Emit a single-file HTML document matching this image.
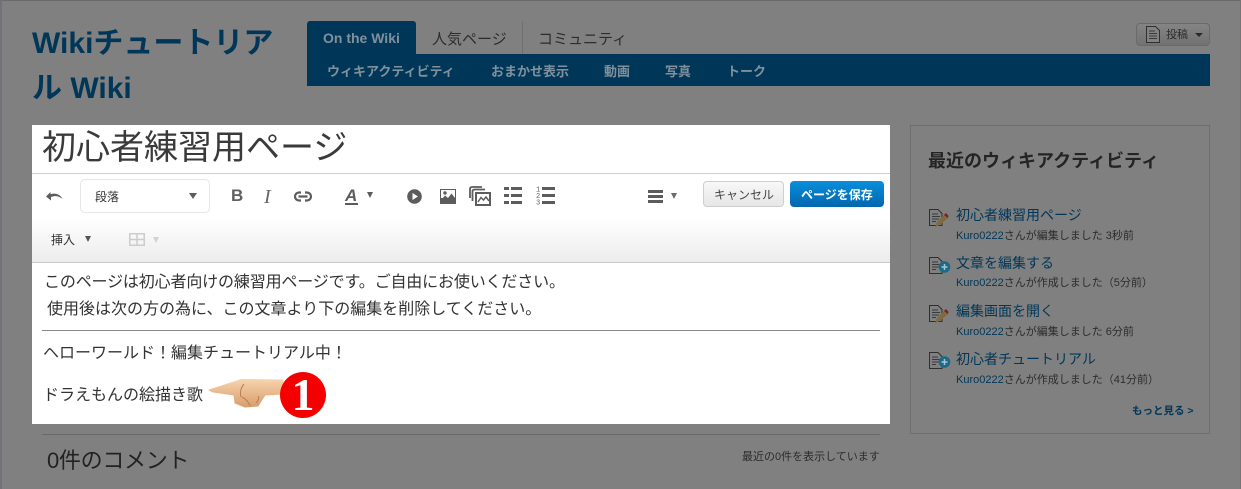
<!DOCTYPE html>
<html lang="ja"><head><meta charset="utf-8"><title>Wiki</title>
<style>
html,body{margin:0;padding:0}
body{width:1241px;height:489px;overflow:hidden;position:relative;background:#808080;font-family:"Liberation Sans","Noto Sans CJK JP",sans-serif;color:#2b2b2b}
.a,.t{position:absolute}
.t{white-space:nowrap;line-height:1.2}
svg{position:absolute;overflow:visible}
</style></head><body>
<div class="a" style="left:0;top:0;width:1241px;height:1px;background:#6a6a6a"></div>
<div class="a" style="left:0;top:0;width:2px;height:489px;background:#707478"></div>
<div class="a" style="right:0;top:0;width:1px;height:489px;background:#757575"></div>

<div class="t" style="left:32px;top:26px;font-size:30px;font-weight:bold;color:#003658;line-height:36px">Wikiチュートリア</div>
<div class="t" style="left:32px;top:71px;font-size:30px;font-weight:bold;color:#003658;line-height:36px">ル Wiki</div>

<div class="a" style="left:307px;top:21px;width:109px;height:40px;background:#003658;border-radius:3px 3px 0 0"></div>
<div class="a" style="left:307px;top:54px;width:903px;height:32px;background:#003658"></div>
<div class="t" style="left:323px;top:30px;font-size:14px;font-weight:bold;color:#80919d">On the Wiki</div>
<div class="t" style="left:432px;top:31px;font-size:15px;color:#2d2d2d">人気ページ</div>
<div class="a" style="left:522px;top:21px;width:1px;height:33px;background:#6f6f6f"></div>
<div class="t" style="left:538px;top:31px;font-size:15px;color:#2d2d2d">コミュニティ</div>
<div class="t" style="left:327px;top:64px;font-size:13px;font-weight:bold;color:#80919d">ウィキアクティビティ</div>
<div class="t" style="left:491px;top:64px;font-size:13px;font-weight:bold;color:#80919d">おまかせ表示</div>
<div class="t" style="left:604px;top:64px;font-size:13px;font-weight:bold;color:#80919d">動画</div>
<div class="t" style="left:665px;top:64px;font-size:13px;font-weight:bold;color:#80919d">写真</div>
<div class="t" style="left:727px;top:64px;font-size:13px;font-weight:bold;color:#80919d">トーク</div>

<div class="a" style="left:1136px;top:23px;width:72px;height:21px;border:1px solid #6a6a6a;border-radius:4px;background:linear-gradient(#848484,#727272)"></div>
<svg style="left:1146px;top:26px" width="14" height="17" viewBox="0 0 14 17"><path d="M.5.5H9.5L13.5 4.500V16.500H.5Z" fill="#828282" stroke="#2f2f2f"/><path d="M3 5H9M3 7.500H11M3 10H11M3 12.500H11" stroke="#3a3a3a"/></svg>
<div class="t" style="left:1166px;top:29px;font-size:11px;color:#2b2b2b">投稿</div>
<div class="a" style="left:1195px;top:33px;border:4px solid transparent;border-top:4px solid #2a2a2a"></div>

<!-- Editor -->
<div class="a" style="left:32px;top:125px;width:858px;height:299px;background:#fff"></div>
<div class="t" style="left:42px;top:126px;font-size:34px;color:#3a3a3a;line-height:44px">初心者練習用ページ</div>
<div class="a" style="left:32px;top:173px;width:858px;height:1px;background:#cfcfcf"></div>
<div class="a" style="left:32px;top:218px;width:858px;height:44px;background:linear-gradient(#fff,#ececec)"></div>
<div class="a" style="left:32px;top:262px;width:858px;height:1px;background:#c9c9c9"></div>

<svg style="left:46px;top:191px" width="17" height="10" viewBox="0 0 17 10"><path d="M0 5.500L4.500 1V3.200C9 1.800 14 3 16.500 8C13 5 9 4.500 5 6V9.500Z" fill="#5c5c5c"/></svg>
<div class="a" style="left:80px;top:179px;width:128px;height:32px;border:1px solid #e6e6e6;border-radius:5px;background:#fff"></div>
<div class="t" style="left:95px;top:190px;font-size:12px;color:#333">段落</div>
<div class="a" style="left:189px;top:193px;border:4px solid transparent;border-top:6px solid #5c5c5c;border-bottom:0"></div>
<div class="t" style="left:231px;top:186px;font-size:17px;font-weight:bold;color:#5f5f5f">B</div>
<div class="t" style="left:264px;top:185px;font-family:'Liberation Serif',serif;font-size:20px;font-style:italic;color:#666">I</div>
<svg style="left:294px;top:191px" width="18" height="11" viewBox="0 0 18 11"><path d="M7 1.500H5a4 4 0 0 0 0 8H7M11 1.500h2a4 4 0 0 1 0 8H11M4.500 5.500H13.500" fill="none" stroke="#5c5c5c" stroke-width="2.200"/></svg>
<div class="t" style="left:345px;top:186px;font-size:17px;font-weight:bold;font-style:italic;color:#5c5c5c">A</div>
<div class="a" style="left:345px;top:203px;width:13px;height:1.500px;background:#5c5c5c"></div>
<div class="a" style="left:367px;top:192px;border:3.500px solid transparent;border-top:6px solid #5c5c5c;border-bottom:0"></div>
<svg style="left:407px;top:189px" width="15" height="15" viewBox="0 0 15 15"><circle cx="7.500" cy="7.500" r="7.300" fill="#5c5c5c"/><path d="M5.500 4L11 7.500L5.500 11Z" fill="#fff"/></svg>
<svg style="left:440px;top:189px" width="16" height="15" viewBox="0 0 16 15"><rect width="16" height="15" fill="#5c5c5c"/><rect x="1" y="1" width="14" height="8" fill="#fff"/><circle cx="5" cy="4" r="1.700" fill="#5c5c5c"/><path d="M1 11L5 6.500L8 9L11.500 4.500L15 9V13H1Z" fill="#5c5c5c"/></svg>
<svg style="left:469px;top:186px" width="22" height="20" viewBox="0 0 22 20"><path d="M1 12V3Q1 1 3 1H13M3.500 15V5.500Q3.500 3.500 5.500 3.500H16" fill="none" stroke="#5c5c5c" stroke-width="1.800"/><rect x="7" y="7" width="14" height="12" fill="#fff" stroke="#5c5c5c" stroke-width="2"/><path d="M9 16L12 11.500L14.500 14L17 11L20 15" fill="none" stroke="#5c5c5c" stroke-width="1.500"/></svg>
<svg style="left:504px;top:186px" width="18" height="18" viewBox="0 0 18 18"><path d="M0 1h5v3H0zM7 1h11v3H7zM0 8h5v3H0zM7 8h11v3H7zM0 15h5v3H0zM7 15h11v3H7z" fill="#5c5c5c"/></svg>
<svg style="left:536px;top:186px" width="19" height="18" viewBox="0 0 19 18"><path d="M6 1h13v3H6zM6 8h13v3H6zM6 15h13v3H6z" fill="#5c5c5c"/><text x="0" y="5.500" font-size="7" fill="#5c5c5c" font-family="Liberation Mono">1</text><text x="0" y="12" font-size="7" fill="#5c5c5c" font-family="Liberation Mono">2</text><text x="0" y="18.500" font-size="7" fill="#5c5c5c" font-family="Liberation Mono">3</text></svg>
<svg style="left:648px;top:190px" width="15" height="13" viewBox="0 0 15 13"><path d="M0 0h15v3H0zM0 5h15v3H0zM0 10h15v3H0z" fill="#5c5c5c"/></svg>
<div class="a" style="left:671px;top:193px;border:3.500px solid transparent;border-top:6px solid #6b6b6b;border-bottom:0"></div>

<div class="a" style="left:703px;top:181px;width:79px;height:24px;border:1px solid #cfcfcf;border-radius:4px;background:linear-gradient(#f8f8f8,#e6e6e6)"></div>
<div class="t" style="left:714px;top:188px;font-size:12px;color:#444">キャンセル</div>
<div class="a" style="left:790px;top:181px;width:94px;height:26px;border-radius:4px;background:linear-gradient(#0a8fdc,#0066ae)"></div>
<div class="t" style="left:801px;top:188px;font-size:12px;font-weight:bold;color:#fff">ページを保存</div>

<div class="t" style="left:51px;top:233px;font-size:12px;color:#333">挿入</div>
<div class="a" style="left:85px;top:236px;border:3.500px solid transparent;border-top:6px solid #555;border-bottom:0"></div>
<svg style="left:129px;top:233px" width="16" height="13" viewBox="0 0 16 13"><rect x=".75" y=".75" width="14.500" height="11.500" fill="none" stroke="#ccc" stroke-width="1.500"/><path d="M8 0V13M0 6.500H16" stroke="#ccc" stroke-width="1.500"/></svg>
<div class="a" style="left:153px;top:237px;border:3.500px solid transparent;border-top:6px solid #d2d2d2;border-bottom:0"></div>

<div class="t" style="left:44px;top:273px;font-size:16px;color:#333;letter-spacing:-.15px">このページは初心者向けの練習用ページです。ご自由にお使いください。</div>
<div class="t" style="left:47px;top:300px;font-size:16px;color:#333">使用後は次の方の為に、この文章より下の編集を削除してください。</div>
<div class="a" style="left:42px;top:330px;width:838px;height:1px;background:#888"></div>
<div class="t" style="left:43px;top:344px;font-size:16px;color:#333">ヘローワールド！編集チュートリアル中！</div>
<div class="t" style="left:43px;top:386px;font-size:16px;color:#333">ドラえもんの絵描き歌</div>

<svg style="left:208px;top:370px" width="122" height="50" viewBox="0 0 122 50">
<defs><linearGradient id="h" x1="0" y1="0" x2="0" y2="1"><stop offset="0" stop-color="#f6d3ac"/><stop offset="1" stop-color="#d99d6c"/></linearGradient></defs>
<path d="M1 20L29 11L33 9.500L75 10L75 24L57 25L50 36L37 37L27 33L26 25L5 22Z" fill="url(#h)" stroke="url(#h)" stroke-linejoin="round"/>
<path d="M36 14Q31 20 33 27M48 33Q52 29 50 26M34 27Q40 30 42 36" fill="none" stroke="#b67f55" stroke-width="1"/>
<circle cx="95" cy="25" r="23" fill="#f40000"/>
<text x="95" y="40" font-family="Liberation Serif" font-size="46" font-weight="bold" fill="#fff" text-anchor="middle">1</text>
</svg>

<!-- Comments -->
<div class="a" style="left:42px;top:434px;width:838px;height:1px;background:#696969"></div>
<div class="t" style="left:47px;top:447px;font-size:22px;color:#222;line-height:28px;letter-spacing:-.3px">0件のコメント</div>
<div class="t" style="left:742px;top:451px;font-size:11px;color:#2b2b2b">最近の0件を表示しています</div>

<!-- Sidebar -->
<div class="a" style="left:910px;top:125px;width:298px;height:307px;border:1px solid #6e6e6e"></div>
<div class="t" style="left:928px;top:151px;font-size:18px;font-weight:bold;color:#242424">最近のウィキアクティビティ</div>

<svg style="left:929px;top:209px" width="20" height="20" viewBox="0 0 20 20"><path d="M.5.500H9L13 4.500V16.500H.5Z" fill="#808080" stroke="#2f2f2f"/><path d="M3 5H9M3 7.500H11M3 10H10M3 12.500H7" stroke="#3a3a3a"/><path d="M6 18L8 13L15 6L19 9L11 16Z" fill="#806a3f"/><path d="M15 6L17 4L19.500 7L19 9Z" fill="#7a1f1f"/></svg>
<div class="t" style="left:956px;top:207px;font-size:14px;color:#003658">初心者練習用ページ</div>
<div class="t" style="left:956px;top:230px;font-size:11px;color:#2c2c2c"><span style="color:#003658">Kuro0222</span>さんが編集しました 3秒前</div>

<svg style="left:929px;top:257px" width="22" height="17" viewBox="0 0 22 17"><path d="M.5.500H9L13 4.500V16.500H.5Z" fill="#808080" stroke="#2f2f2f"/><path d="M3 5H9M3 7.500H11M3 10H10M3 12.500H7" stroke="#3a3a3a"/><circle cx="15.500" cy="10" r="5.800" fill="#1c6a8a"/><path d="M12.500 10h6M15.500 7v6" stroke="#a9c4d0" stroke-width="1.500"/></svg>
<div class="t" style="left:956px;top:255px;font-size:14px;color:#003658">文章を編集する</div>
<div class="t" style="left:956px;top:277px;font-size:11px;color:#2c2c2c"><span style="color:#003658">Kuro0222</span>さんが作成しました（5分前）</div>

<svg style="left:929px;top:305px" width="20" height="20" viewBox="0 0 20 20"><path d="M.5.500H9L13 4.500V16.500H.5Z" fill="#808080" stroke="#2f2f2f"/><path d="M3 5H9M3 7.500H11M3 10H10M3 12.500H7" stroke="#3a3a3a"/><path d="M6 18L8 13L15 6L19 9L11 16Z" fill="#806a3f"/><path d="M15 6L17 4L19.500 7L19 9Z" fill="#7a1f1f"/></svg>
<div class="t" style="left:956px;top:303px;font-size:14px;color:#003658">編集画面を開く</div>
<div class="t" style="left:956px;top:326px;font-size:11px;color:#2c2c2c"><span style="color:#003658">Kuro0222</span>さんが編集しました 6分前</div>

<svg style="left:929px;top:352px" width="22" height="17" viewBox="0 0 22 17"><path d="M.5.500H9L13 4.500V16.500H.5Z" fill="#808080" stroke="#2f2f2f"/><path d="M3 5H9M3 7.500H11M3 10H10M3 12.500H7" stroke="#3a3a3a"/><circle cx="15.500" cy="10" r="5.800" fill="#1c6a8a"/><path d="M12.500 10h6M15.500 7v6" stroke="#a9c4d0" stroke-width="1.500"/></svg>
<div class="t" style="left:956px;top:351px;font-size:14px;color:#003658">初心者チュートリアル</div>
<div class="t" style="left:956px;top:374px;font-size:11px;color:#2c2c2c"><span style="color:#003658">Kuro0222</span>さんが作成しました（41分前）</div>
<div class="t" style="left:1132px;top:405px;font-size:10.500px;font-weight:bold;color:#003658">もっと見る &gt;</div>
</body></html>
